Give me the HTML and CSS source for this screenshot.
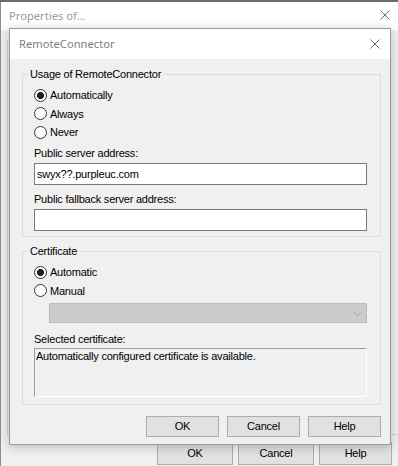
FILE: index.html
```html
<!DOCTYPE html>
<html>
<head>
<meta charset="utf-8">
<link rel="stylesheet" href="styles.css">
</head>
<body>
<div class="desk-strip"></div>
<div class="outer">
  <div class="outer-title">
    <span class="wtitle outer-wtitle">Properties of...</span>
    <svg class="close outer-close" width="10" height="10" viewBox="0 0 10 10"><path d="M0.5 0.5L9.5 9.5M9.5 0.5L0.5 9.5" stroke="#707070" stroke-width="1" fill="none"/></svg>
  </div>
  <div class="outer-body">
    <div class="outer-panel"></div>
    <div class="outer-buttons">
      <div class="btn obtn">OK</div>
      <div class="btn obtn">Cancel</div>
      <div class="btn obtn obtn-last">Help</div>
    </div>
  </div>
</div>

<div class="dialog">
  <div class="dlg-title">
    <span class="wtitle">RemoteConnector</span>
    <svg class="close dlg-close" width="10" height="10" viewBox="0 0 10 10"><path d="M0.5 0.5L9.5 9.5M9.5 0.5L0.5 9.5" stroke="#707070" stroke-width="1" fill="none"/></svg>
  </div>
  <div class="dlg-body">
    <fieldset class="group">
      <legend>Usage of RemoteConnector</legend>
      <div class="radio"><span class="circle checked"></span><span>Automatically</span></div>
      <div class="radio"><span class="circle"></span><span>Always</span></div>
      <div class="radio"><span class="circle"></span><span>Never</span></div>
      <div class="lbl lbl-first">Public server address:</div>
      <div class="textbox">swyx??.purpleuc.com</div>
      <div class="lbl">Public fallback server address:</div>
      <div class="textbox"></div>
    </fieldset>
    <fieldset class="group g2">
      <legend>Certificate</legend>
      <div class="radio"><span class="circle checked"></span><span>Automatic</span></div>
      <div class="radio"><span class="circle"></span><span>Manual</span></div>
      <div class="combo">
        <svg width="9" height="5" viewBox="0 0 9 5"><path d="M0.5 0.5L4.5 4.5L8.5 0.5" stroke="#a8a8a8" stroke-width="1" fill="none"/></svg>
      </div>
      <div class="lbl lbl-cert">Selected certificate:</div>
      <div class="readonly">Automatically configured certificate is available.</div>
    </fieldset>
    <div class="buttons">
      <div class="btn">OK</div>
      <div class="btn">Cancel</div>
      <div class="btn">Help</div>
    </div>
  </div>
</div>
</body>
</html>
```
FILE: styles.css
```css
html, body {
  margin: 0;
  padding: 0;
}
body {
  width: 398px;
  height: 466px;
  overflow: hidden;
  position: relative;
  background: #f0f0f0;
  font-family: "Liberation Sans", Arial, sans-serif;
  font-size: 11px;
  letter-spacing: -0.22px;
  color: #000;
}
.desk-strip {
  height: 2px;
  background: #6a6a6a;
}
.outer {
  height: 464px;
  box-sizing: border-box;
  border-left: 1px solid #8c8c8c;
  display: flex;
  flex-direction: column;
}
.outer-title {
  height: 28px;
  flex: none;
  background: #fff;
  display: flex;
  align-items: center;
  padding-left: 8px;
}
.wtitle {
  font-family: "Noto Sans", "Open Sans", sans-serif;
  font-size: 11.2px;
  letter-spacing: 0;
  color: #7e7e7e;
  line-height: 16px;
}
.outer-wtitle {
  color: #9a9a9a;
}
.close {
  display: block;
  margin-left: auto;
}
.outer-close {
  margin-right: 8px;
  margin-top: -2px;
}
.outer-body {
  flex: 1;
  display: flex;
  flex-direction: column;
  background: #f0f0f0;
}
.outer-panel {
  flex: 1;
  margin-top: 10px;
  margin-left: 6px;
  border-left: 1px solid #d4d4d4;
  border-bottom: 1px solid #d4d4d4;
}
.outer-buttons {
  display: flex;
  justify-content: flex-end;
  gap: 5px;
  margin-top: 7px;
  padding-right: 6px;
  padding-bottom: 1px;
}
.btn {
  width: 73px;
  height: 21px;
  box-sizing: border-box;
  border: 1px solid #adadad;
  background: #e1e1e1;
  text-align: center;
  line-height: 19px;
}
.obtn {
  width: 76px;
  height: 23px;
  line-height: 21px;
}
.obtn-last {
  width: 73px;
}

.dialog {
  position: absolute;
  left: 9px;
  top: 28px;
  width: 382px;
  height: 417px;
  box-sizing: border-box;
  border: 1px solid #9c9c9c;
  background: #f0f0f0;
  box-shadow: 0 2px 10px rgba(0, 0, 0, 0.22);
  display: flex;
  flex-direction: column;
}
.dlg-title {
  height: 30px;
  flex: none;
  background: #fff;
  display: flex;
  align-items: center;
  padding-left: 9px;
}
.dlg-close {
  margin-right: 10px;
  margin-top: -1px;
}
.dlg-body {
  flex: 1;
  padding: 8px 9px 7px 12px;
  display: flex;
  flex-direction: column;
}
.group {
  margin: 0;
  padding: 4px 13px 5px 11px;
  border: 1px solid #dcdcdc;
  min-width: 0;
}
.group legend {
  padding: 0 2px;
  margin-left: -6px;
  line-height: 15px;
  height: 15px;
}
.g2 {
  margin-top: 7px;
  padding-bottom: 7px;
}
.radio {
  height: 18.5px;
  display: flex;
  align-items: center;
  gap: 3px;
}
.circle {
  width: 13px;
  height: 13px;
  box-sizing: border-box;
  border: 1px solid #333;
  border-radius: 50%;
  background: #fff;
  flex: none;
}
.circle.checked {
  background: radial-gradient(circle, #1e1e1e 0 3.2px, #fff 3.8px);
}
.lbl {
  line-height: 14px;
  height: 14px;
  margin-top: 7px;
}
.lbl-first {
  margin-top: 4.5px;
}
.textbox {
  height: 22px;
  box-sizing: border-box;
  border: 1px solid #7a7a7a;
  background: #fff;
  margin-top: 3px;
  padding-left: 2px;
  line-height: 20px;
}
.combo {
  margin-top: 3px;
  margin-left: 15px;
  height: 20px;
  box-sizing: border-box;
  border: 1px solid #bcbcbc;
  background: #cccccc;
  display: flex;
  align-items: center;
  justify-content: flex-end;
  padding-right: 4px;
}
.combo svg {
  display: block;
}
.lbl-cert {
  margin-top: 9px;
}
.readonly {
  margin-top: 2px;
  height: 49px;
  box-sizing: border-box;
  border-top: 1px solid #a0a0a0;
  border-left: 1px solid #a0a0a0;
  border-right: 1px solid #fff;
  border-bottom: 1px solid #fff;
  padding: 0 1px;
  line-height: 14px;
}
.buttons {
  display: flex;
  justify-content: flex-end;
  gap: 8px;
  margin-top: 11px;
}
```
